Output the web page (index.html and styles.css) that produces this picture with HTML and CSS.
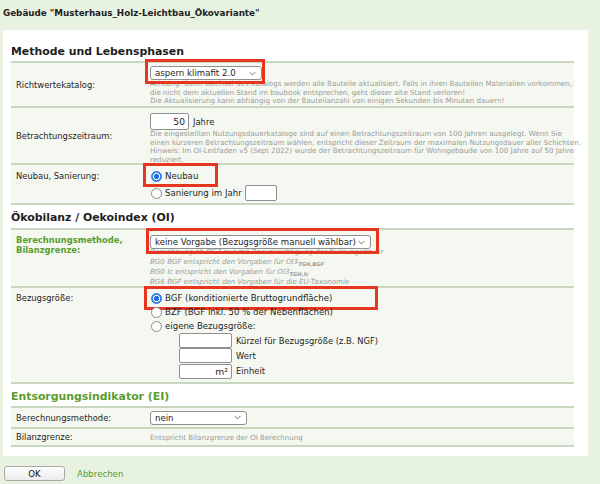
FILE: index.html
```html
<!DOCTYPE html>
<html lang="de">
<head>
<meta charset="utf-8">
<title>Gebäude</title>
<link rel="stylesheet" href="styles.css">
</head>
<body>
<div class="title">Gebäude "Musterhaus_Holz-Leichtbau_Ökovariante"</div>
<div class="panel">
  <h2 class="sec sec-1">Methode und Lebensphasen</h2>
  <div class="rows">
    <div class="row r-katalog">
      <div class="lbl mid">Richtwertekatalog:</div>
      <div class="val">
        <div class="sel hl hl-katalog"><span class="sel-text">aspern klimafit 2.0</span><svg class="chev" viewBox="0 0 10 6"><path d="M1 1l4 4 4-4" fill="none" stroke="#444" stroke-width="1.1"/></svg></div>
        <div class="note">Achtung: Beim Wechsel des Katalogs werden alle Bauteile aktualisiert. Falls in ihren Bauteilen Materialien vorkommen,<br>die nicht dem aktuellen Stand im baubook entsprechen, geht dieser alte Stand verloren!<br>Die Aktualisierung kann abhängig von der Bauteilanzahl von einigen Sekunden bis Minuten dauern!</div>
      </div>
    </div>
    <div class="row r-zeit">
      <div class="lbl mid">Betrachtungszeitraum:</div>
      <div class="val">
        <div class="inline"><span class="inp inp-years">50</span><span>Jahre</span></div>
        <div class="note">Die eingestellten Nutzungsdauerkataloge sind auf einen Betrachtungszeitraum von 100 Jahren ausgelegt. Wenn Sie<br>einen kürzeren Betrachtungszeitraum wählen, entspricht dieser Zeitraum der maximalen Nutzungsdauer aller Schichten.<br>Hinweis: Im OI-Leitfaden v5 (Sept 2022) wurde der Betrachtungszeitraum für Wohngebäude von 100 Jahre auf 50 Jahre<br>reduziert.</div>
      </div>
    </div>
    <div class="row r-neubau">
      <div class="lbl">Neubau, Sanierung:</div>
      <div class="val">
        <div class="radio-line"><span class="radio hl hl-neubau"><span class="dot on"></span>Neubau</span></div>
        <div class="radio-line line-jahr"><span class="radio"><span class="dot"></span>Sanierung im Jahr</span><span class="inp inp-jahr"></span></div>
      </div>
    </div>
  </div>

  <h2 class="sec sec-2">Ökobilanz / Oekoindex (OI)</h2>
  <div class="rows">
    <div class="row r-methode">
      <div class="lbl green">Berechnungsmethode,<br>Bilanzgrenze:</div>
      <div class="val">
        <div class="sel sel-wide hl hl-methode"><span class="sel-text">keine Vorgabe (Bezugsgröße manuell wählbar)</span><svg class="chev" viewBox="0 0 10 6"><path d="M1 1l4 4 4-4" fill="none" stroke="#444" stroke-width="1.1"/></svg></div>
        <div class="note it">Berechnung ab BG3 nur mit Berücksichtigung der Nutzungsdauer<br>BG0 BGF entspricht den Vorgaben für OI3<sub>TGH,BGF</sub><br>BG0 lc entspricht den Vorgaben für OI3<sub>TGH,lc</sub><br>BG6 BGF entspricht den Vorgaben für die EU-Taxonomie</div>
      </div>
    </div>
    <div class="row r-bezug">
      <div class="lbl">Bezugsgröße:</div>
      <div class="val">
        <div class="radio-line"><span class="radio hl hl-bgf"><span class="dot on"></span>BGF (konditionierte Bruttogrundfläche)</span></div>
        <div class="radio-line"><span class="radio"><span class="dot"></span>BZF (BGF inkl. 50 % der Nebenflächen)</span></div>
        <div class="radio-line"><span class="radio"><span class="dot"></span>eigene Bezugsgröße:</span></div>
        <div class="own"><span class="inp inp-own"></span><span>Kürzel für Bezugsgröße (z.B. NGF)</span></div>
        <div class="own"><span class="inp inp-own"></span><span>Wert</span></div>
        <div class="own"><span class="inp inp-own">m²</span><span>Einheit</span></div>
      </div>
    </div>
  </div>

  <h2 class="sec sec-3 green">Entsorgungsindikator (EI)</h2>
  <div class="rows">
    <div class="row r-ei">
      <div class="lbl mid">Berechnungsmethode:</div>
      <div class="val mid"><div class="sel sel-nein"><span class="sel-text">nein</span><svg class="chev" viewBox="0 0 10 6"><path d="M1 1l4 4 4-4" fill="none" stroke="#444" stroke-width="1.1"/></svg></div></div>
    </div>
    <div class="row r-bil">
      <div class="lbl mid">Bilanzgrenze:</div>
      <div class="val mid"><span class="note">Entspricht Bilanzgrenze der OI Berechnung</span></div>
    </div>
  </div>
</div>
<div class="actions">
  <button class="btn" type="button">OK</button>
  <a class="cancel" href="#">Abbrechen</a>
</div>
</body>
</html>
```

FILE: styles.css
```css
* { box-sizing: border-box; }
html, body { margin: 0; }
body {
  background: #e8f2e1;
  font-family: "DejaVu Sans", Verdana, sans-serif;
  font-size: 8.4px;
  color: #1e1e1e;
  width: 600px;
  height: 484px;
  overflow: hidden;
}
.title {
  font-weight: bold;
  font-size: 8.75px;
  line-height: 12px;
  padding: 7px 3px 0;
  height: 30px;
}
.panel {
  margin: 0 12px 0 3px;
  background: #fff;
  padding: 0 14px 9px 8px;
}
.sec {
  font-size: 10.9px;
  font-weight: bold;
  margin: 0;
  line-height: 14px;
}
.sec-1 { height: 31px; padding-top: 15px; }
.sec-2 { height: 23px; padding-top: 6px; }
.sec-3 { height: 22px; padding-top: 6px; }
.green { color: #5a9c2f; }

.rows { border-top: 2px solid #c9d6c0; }
.row {
  display: grid;
  grid-template-columns: 139px 1fr;
  background: #f4f8f0;
  border-bottom: 2px solid #c9d6c0;
}
.lbl {
  padding-left: 5px;
  white-space: nowrap;
  line-height: 14px;
}
.mid { align-self: center; }
.val { min-width: 0; }

.note {
  color: #9a9a9a;
  font-size: 7.1px;
  line-height: 8.6px;
  white-space: nowrap;
}
.note.it { font-style: italic; line-height: 10px; margin-top: -2px; }
.note sub { font-size: 5.2px; font-weight: bold; vertical-align: -2px; line-height: 0; }

.sel {
  position: relative;
  display: flex;
  align-items: center;
  justify-content: space-between;
  width: 112px;
  height: 14px;
  border: 1px solid #8f8f8f;
  border-radius: 3px;
  background: #fff;
  padding: 0 5px 0 4px;
  font-size: 8.6px;
}
.sel-wide { width: 221px; }
.sel-nein { width: 97px; }
.chev { width: 7px; height: 5px; }

.inp {
  display: inline-block;
  background: #fff;
  border: 1px solid #8f8f8f;
  border-radius: 2px;
  text-align: right;
  padding-right: 3px;
  font-size: 9.2px;
}

/* row 1 */
.r-katalog { height: 45px; }
.r-katalog .val { padding-top: 3px; }
/* row 2 */
.r-zeit { height: 57px; }
.r-zeit .val { padding-top: 5px; }
.inline { display: flex; align-items: center; gap: 4px; }
.inp-years { width: 39px; height: 17px; line-height: 15px; }
/* row 3 */
.r-neubau { height: 40px; }
.r-neubau .lbl { padding-top: 4px; }
.r-neubau .val { padding-top: 4px; }
.radio-line { display: flex; align-items: center; height: 14px; }
.line-jahr { height: 18px; margin-top: 1px; }
.inp-jahr { width: 32px; height: 16px; margin-left: 3px; }
.radio {
  position: relative;
  display: inline-flex;
  align-items: center;
  gap: 3px;
  padding-left: 1px;
  font-size: 8.6px;
}
.dot {
  display: inline-block;
  width: 11px;
  height: 11px;
  border-radius: 50%;
  border: 1px solid #8d8d8d;
  background: #fff;
}
.dot.on {
  border: 1px solid #2b74e6;
  background: radial-gradient(circle, #1f6ee4 0 2.3px, #fff 2.8px 3.3px, #3a86f2 3.8px);
}

/* OI rows */
.r-methode { height: 58px; }
.r-methode .lbl { font-weight: bold; line-height: 10px; padding-top: 5px; }
.r-methode .val { padding-top: 5px; }
.r-bezug { height: 96px; }
.r-bezug .lbl { padding-top: 3px; }
.r-bezug .val { padding-top: 3px; }
.own { display: flex; align-items: center; gap: 4px; margin-left: 29px; height: 15.3px; }
.inp-own { width: 53px; height: 15px; line-height: 13px; }

.r-ei { height: 21px; }
.r-bil { height: 18px; }

/* red highlight annotations */
.hl { position: relative; }
.hl::after {
  content: "";
  position: absolute;
  border: 3px solid #e6361f;
  pointer-events: none;
}
.hl-katalog::after { left: -6px; right: -4px; top: -8px; bottom: -5px; }
.hl-methode::after { left: -5px; right: -9px; top: -8px; bottom: -6px; }
.hl-neubau::after { left: -7px; right: -20px; top: -8px; bottom: -5px; }
.hl-bgf::after { left: -6px; right: -46px; top: -7px; bottom: -6px; }

.actions {
  display: flex;
  align-items: center;
  gap: 12px;
  padding: 10px 0 0 4px;
}
.btn {
  width: 61px;
  height: 15px;
  padding: 0;
  border: 1px solid #a9a9a9;
  border-radius: 3px;
  background: linear-gradient(#fdfdfd, #ececec);
  font-family: "DejaVu Sans", Verdana, sans-serif;
  font-size: 8.6px;
  color: #111;
}
.cancel {
  color: #5a9c2f;
  text-decoration: none;
  font-size: 8.6px;
}
```
